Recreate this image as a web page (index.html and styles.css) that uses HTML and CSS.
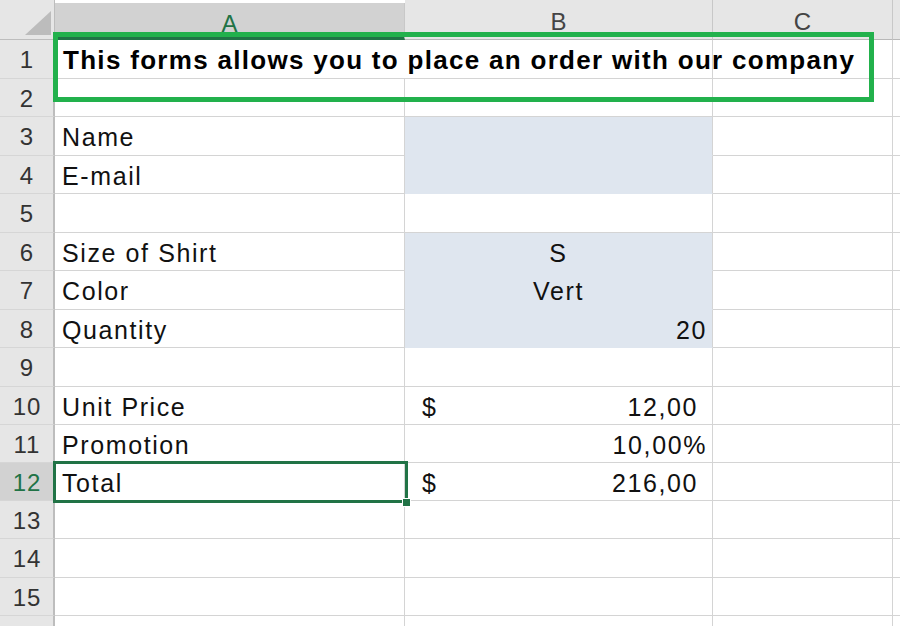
FILE: index.html
```html
<!DOCTYPE html>
<html>
<head>
<meta charset="utf-8">
<link rel="stylesheet" href="styles.css">
</head>
<body>
<div class="sheet">
  <div class="corner"><svg class="tri" width="26" height="24" viewBox="0 0 26 24"><polygon points="0,24 26,24 26,0" fill="#bcbcbc"/></svg></div>
  <div class="colhead sel">A</div>
  <div class="colhead">B</div>
  <div class="colhead">C</div>
  <div class="colhead last"></div>

  <div class="rowhead">1</div><div class="cell title span2">This forms allows you to place an order with our company</div><div class="cell"></div><div class="cell"></div>
  <div class="rowhead">2</div><div class="cell"></div><div class="cell"></div><div class="cell"></div><div class="cell"></div>
  <div class="rowhead">3</div><div class="cell">Name</div><div class="cell fill"></div><div class="cell"></div><div class="cell"></div>
  <div class="rowhead">4</div><div class="cell">E-mail</div><div class="cell fill"></div><div class="cell"></div><div class="cell"></div>
  <div class="rowhead">5</div><div class="cell"></div><div class="cell"></div><div class="cell"></div><div class="cell"></div>
  <div class="rowhead">6</div><div class="cell">Size of Shirt</div><div class="cell fill center">S</div><div class="cell"></div><div class="cell"></div>
  <div class="rowhead">7</div><div class="cell">Color</div><div class="cell fill center">Vert</div><div class="cell"></div><div class="cell"></div>
  <div class="rowhead">8</div><div class="cell">Quantity</div><div class="cell fill right">20</div><div class="cell"></div><div class="cell"></div>
  <div class="rowhead">9</div><div class="cell"></div><div class="cell"></div><div class="cell"></div><div class="cell"></div>
  <div class="rowhead">10</div><div class="cell">Unit Price</div><div class="cell acct"><span>$</span><span>12,00</span></div><div class="cell"></div><div class="cell"></div>
  <div class="rowhead">11</div><div class="cell">Promotion</div><div class="cell right">10,00%</div><div class="cell"></div><div class="cell"></div>
  <div class="rowhead selrow">12</div><div class="cell">Total</div><div class="cell acct"><span>$</span><span>216,00</span></div><div class="cell"></div><div class="cell"></div>
  <div class="rowhead">13</div><div class="cell"></div><div class="cell"></div><div class="cell"></div><div class="cell"></div>
  <div class="rowhead">14</div><div class="cell"></div><div class="cell"></div><div class="cell"></div><div class="cell"></div>
  <div class="rowhead">15</div><div class="cell"></div><div class="cell"></div><div class="cell"></div><div class="cell"></div>
  <div class="rowhead"></div><div class="cell"></div><div class="cell"></div><div class="cell"></div><div class="cell"></div>

  <div class="annot"></div>
  <div class="selection"><div class="handle"></div></div>
</div>
</body>
</html>
```
FILE: styles.css
```css
html, body {
  margin: 0;
  padding: 0;
  background: #ffffff;
  overflow: hidden;
}
.sheet {
  position: relative;
  width: 900px;
  height: 626px;
  display: grid;
  grid-template-columns: 55px 350px 308px 180px 7px;
  grid-template-rows: 40px 39px 38px 39px 38px 39px 38px 39px 38px 39px 38px 38px 38px 38px 39px 38px 12px;
  font-family: "Liberation Sans", Arial, sans-serif;
  font-size: 25px;
  letter-spacing: 1.6px;
  color: #111;
}
.corner {
  background: #e6e6e6;
  border-right: 1px solid #bdbdbd;
  border-bottom: 1px solid #bdbdbd;
  box-sizing: border-box;
  position: relative;
}
.tri {
  position: absolute;
  left: 25px;
  top: 11px;
}
.colhead {
  background: #e6e6e6;
  border-right: 1px solid #c8c8c8;
  border-bottom: 1px solid #b8b8b8;
  box-sizing: border-box;
  text-align: center;
  line-height: 44px;
  color: #444;
  font-size: 24px;
  letter-spacing: 0;
  overflow: hidden;
}
.colhead.sel {
  background: #d2d2d2;
  color: #217346;
  border-bottom: 3px solid #217346;
  line-height: 42px;
  margin-top: 3px;
}
.colhead.last {
  border-right: none;
}
.rowhead {
  background: #e6e6e6;
  border-right: 2px solid #bdbdbd;
  border-bottom: 1px solid #d6d6d6;
  box-sizing: border-box;
  text-align: center;
  line-height: 40px;
  color: #333;
  font-size: 24px;
  letter-spacing: 1px;
  padding-left: 1px;
}
.rowhead.selrow {
  background: #d2d2d2;
  color: #217346;
}
.cell {
  border-right: 1px solid #d4d4d4;
  border-bottom: 1px solid #d4d4d4;
  box-sizing: border-box;
  padding: 0 7px;
  line-height: 40px;
  white-space: nowrap;
  overflow: visible;
}
.span2 {
  grid-column: span 2;
}
.title {
  font-weight: bold;
  font-size: 26px;
  letter-spacing: 1.3px;
  padding-left: 8px;
  color: #000;
}
.fill {
  background: #dfe6ef;
  border-bottom-color: #dfe6ef;
}
.center {
  text-align: center;
}
.right {
  text-align: right;
  padding-right: 5px;
}
.acct {
  display: flex;
  justify-content: space-between;
  padding-left: 17px;
  padding-right: 14px;
}
.annot {
  position: absolute;
  left: 53px;
  top: 32px;
  width: 821px;
  height: 70px;
  border: 5px solid #22b14c;
  box-sizing: border-box;
}
.selection {
  position: absolute;
  left: 53px;
  top: 461px;
  width: 355px;
  height: 42px;
  border: 3px solid #217346;
  box-sizing: border-box;
}
.handle {
  position: absolute;
  right: -6px;
  bottom: -7px;
  width: 7px;
  height: 7px;
  background: #217346;
  border: 1px solid #ffffff;
}
```
